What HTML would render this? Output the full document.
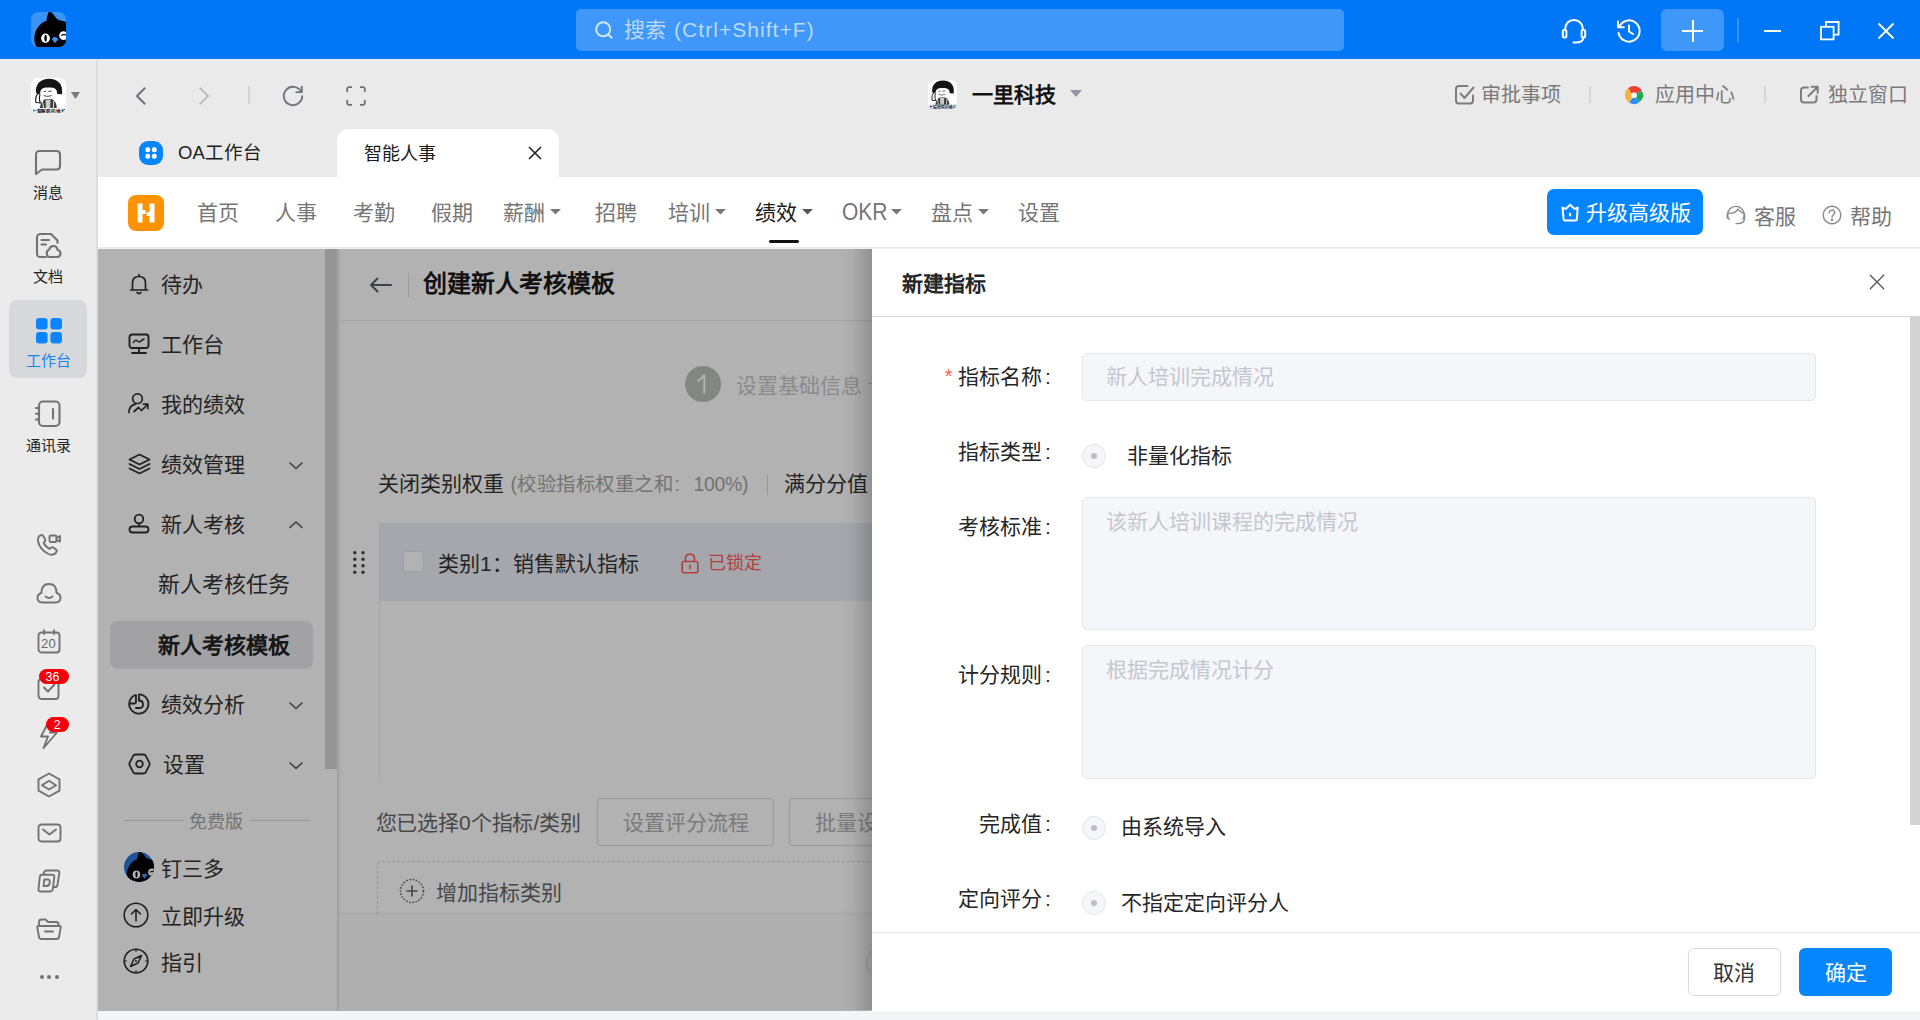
<!DOCTYPE html>
<html lang="zh-CN">
<head>
<meta charset="utf-8">
<title>DingTalk</title>
<style>
*{box-sizing:border-box;margin:0;padding:0}
html,body{width:1920px;height:1020px;overflow:hidden;background:#eaeaea;font-family:"Liberation Sans",sans-serif;color:#333;}
.a{position:absolute;white-space:nowrap}
.t{position:absolute;white-space:nowrap;line-height:1;transform:translateY(-50%)}
svg{position:absolute;overflow:visible}
#titlebar{left:0;top:0;width:1920px;height:59px;background:#0077f7}
#search{left:576px;top:9px;width:768px;height:42px;border-radius:5px;background:#3f97f9}
#rail{left:0;top:59px;width:98px;height:961px;background:#ebebeb;border-right:2px solid #dcdde0}
#topnav{left:98px;top:59px;width:1822px;height:118px;background:#eaeaea}
#appbar{left:98px;top:177px;width:1822px;height:70px;background:#fff}
#appline{left:98px;top:248.4px;width:1822px;height:.6px;background:#f0f0f0}
#under{left:98px;top:249px;width:774px;height:761.5px;background:#fff;overflow:hidden}
#mask{left:98px;top:249px;width:774px;height:761.5px;background:rgba(0,0,0,.3)}
#bottom{left:98px;top:1010.5px;width:1822px;height:10px;background:#f4f5f7}
#drawer{left:872px;top:249px;width:1048px;height:761px;background:#fff}
</style>
</head>
<body>
<div class="a" id="topnav"></div>
<div class="a" id="titlebar"></div>
<div class="a" id="search"></div>

<!-- ===== TITLE BAR ===== -->
<div class="a" style="left:31px;top:12px;width:35px;height:35px;border-radius:7px;background:#3b93f8;overflow:hidden">
<svg width="35" height="35" viewBox="0 0 35 35" style="left:0;top:0">
<path d="M5.5 35 C3.6 31 3 28 3.4 24.5 C4.5 16 10 10.5 15.9 8.6 L15.3 6.8 L16.2 5.6 L15.9 4.2 L16.9 3 L16.8 1.6 L17.6 0.3 L20.6 0.2 L26 7.1 C29 8.6 32 9 35 9.9 L35 35 Z" fill="#000"/>
<ellipse cx="14.5" cy="26.2" rx="4.4" ry="4.7" fill="#fff"/><ellipse cx="14.6" cy="26.2" rx="1.25" ry="3.4" fill="#000"/>
<circle cx="32.6" cy="23.6" r="4.4" fill="#fff"/><path d="M30.3 23.6 Q31.5 22.2 35 22.9" stroke="#000" stroke-width="1.2" fill="none"/>
<path d="M24 25 Q27 25.3 27.2 27.2 L24.6 30.6 Q24 31 23.4 30.6 L20.9 27.3 Q21 25.3 24 25Z" fill="#3d8ef5"/>
</svg></div>
<svg width="22" height="22" viewBox="0 0 22 22" style="left:593.3px;top:19.3px" fill="none" stroke="#d4e7fd" stroke-width="2" stroke-linecap="round"><circle cx="10.2" cy="10.3" r="7"/><path d="M15.6 15.6 L18.6 18.8"/></svg>
<div class="t" style="left:624px;top:29px;font-size:21px;color:#bcdafc;letter-spacing:.2px">搜索</div><div class="t" style="left:674px;top:29px;font-size:21px;color:#bcdafc;letter-spacing:1.05px">(Ctrl+Shift+F)</div>
<!-- headset -->
<svg width="26" height="26" viewBox="0 0 26 26" style="left:1561px;top:18px" fill="none" stroke="#fff" stroke-width="2" stroke-linecap="round" stroke-linejoin="round">
<path d="M4.2 12 V11 C4.2 5.5 8 2 13 2 C18 2 21.8 5.5 21.8 11 V12"/><rect x="1.8" y="12" width="3.6" height="7.5" rx="1.3"/><rect x="20.6" y="12" width="3.6" height="7.5" rx="1.3"/><path d="M22.4 19.5 C22.4 23 19.5 24.6 14.5 24.6 H12.5"/></svg>
<!-- history -->
<svg width="26" height="26" viewBox="0 0 26 26" style="left:1616px;top:18px" fill="none" stroke="#fff" stroke-width="2" stroke-linecap="round" stroke-linejoin="round">
<path d="M3.2 9 A10.6 10.6 0 1 1 2.6 15"/><path d="M2 3.5 V9.3 H7.8"/><path d="M13 7.5 V13.5 L17 16"/></svg>
<div class="a" style="left:1661px;top:9px;width:63px;height:42px;border-radius:6px;background:#3f97f9"></div>
<div class="a" style="left:1682px;top:30px;width:21px;height:2px;background:#fff"></div>
<div class="a" style="left:1691.5px;top:20px;width:2px;height:22px;background:#fff"></div>
<div class="a" style="left:1737px;top:18px;width:2px;height:24px;background:#3a93f8"></div>
<div class="a" style="left:1764px;top:30px;width:17px;height:2px;background:#fff"></div>
<svg width="20" height="20" viewBox="0 0 20 20" style="left:1820px;top:21px" fill="none" stroke="#fff" stroke-width="1.8"><rect x="1" y="5.8" width="12.6" height="12.6"/><path d="M6 5.8 V1 H18.6 V13.6 H13.6"/></svg>
<svg width="18" height="18" viewBox="0 0 18 18" style="left:1877px;top:22px" fill="none" stroke="#fff" stroke-width="1.8"><path d="M1.5 1.5 L16.5 16.5 M16.5 1.5 L1.5 16.5"/></svg>
<div class="a" id="rail"></div>
<!-- ===== RAIL ===== -->
<div class="a" style="left:31px;top:78px;width:35px;height:35px;border-radius:7px;background:#fff;overflow:hidden">
<svg width="35" height="35" viewBox="0 0 35 35" style="left:0;top:0">
<path d="M9 30 C9.5 24 12 21 17.5 20.5 C23 21 25.5 24 25.8 30 Z" fill="#3a3a3a"/>
<path d="M14.6 21.5 H19.6 L19.2 30 H14.8Z" fill="#c9c9c9"/>
<path d="M11.5 23 L12.5 30 M22.8 23 L22.3 30" stroke="#e8e8e8" stroke-width="1"/>
<path d="M5 24.5 C4 20 5.5 17 7.3 15.2 L9.2 16.5 C8 19 8.2 22 9.3 24.8 Z" fill="#fff" stroke="#1c1c1c" stroke-width="1.2"/>
<ellipse cx="17.4" cy="14.6" rx="8.6" ry="6.3" fill="#fbfbfb"/>
<path d="M5.3 15.5 C3.5 6 10 0.7 18 0.7 C26.5 0.7 32.5 6 31 16.2 L26.2 16 C26.2 11.5 24.5 9.6 17.5 9.6 C11 9.6 9.3 11.5 9.2 15.5 Z" fill="#151515"/>
<path d="M12.7 13.4 H15 M17.4 13.6 L20.6 13" stroke="#444" stroke-width="1"/>
<path d="M12.8 17.2 Q16.6 19.6 20.6 17.2" stroke="#777" stroke-width="1.2" fill="none"/>
<text x="0.7" y="34.5" font-size="4.85" font-weight="bold" fill="#111" font-family="Liberation Sans, sans-serif" textLength="33.8" lengthAdjust="spacingAndGlyphs">七猫智障的维护</text>
</svg></div>
<svg width="9" height="7" viewBox="0 0 9 7" style="left:71px;top:92px"><path d="M0 0 H9 L4.5 7Z" fill="#7a7a7a"/></svg>
<!-- msg -->
<svg width="28" height="28" viewBox="0 0 28 28" style="left:34px;top:149px" fill="none" stroke="#737373" stroke-width="2.1" stroke-linejoin="round" stroke-linecap="round"><path d="M5.5 2 H22.5 Q26 2 26 5.5 V17 Q26 20.5 22.5 20.5 H8 L2 25 V5.5 Q2 2 5.5 2Z"/></svg>
<div class="t" style="left:33px;top:192px;font-size:15px;color:#222">消息</div>
<!-- doc -->
<svg width="28" height="28" viewBox="0 0 28 28" style="left:35px;top:232px" fill="none" stroke="#737373" stroke-width="2.1" stroke-linejoin="round" stroke-linecap="round"><path d="M11 25 H5.5 Q2 25 2 21.5 V5.5 Q2 2 5.5 2 H16 L22.5 8.5 V11"/><path d="M6.5 8 H14 M6.5 12.5 H11"/><path d="M14.5 25 H22 Q25.5 25 25.5 21.5 Q25.5 18.5 22.5 18 Q22 14 18.5 14 Q15 14 14.2 17.5 Q11.5 18.5 11.8 21.5 Q12 25 14.5 25Z"/></svg>
<div class="t" style="left:33px;top:276px;font-size:15px;color:#222">文档</div>
<!-- workbench active -->
<div class="a" style="left:9px;top:300px;width:78px;height:78px;border-radius:8px;background:#d7d8db"></div>
<svg width="26" height="26" viewBox="0 0 26 26" style="left:35.5px;top:318px" fill="#0a84ff"><rect x="0" y="0" width="11.6" height="11.4" rx="3.2"/><rect x="14.4" y="0" width="11.6" height="11.4" rx="3.2"/><rect x="0" y="14" width="11.6" height="11.4" rx="3.2"/><rect x="14.4" y="14" width="11.6" height="11.4" rx="3.2"/></svg>
<div class="t" style="left:25.5px;top:360px;font-size:15px;color:#1a82f7">工作台</div>
<!-- contacts -->
<svg width="28" height="28" viewBox="0 0 28 28" style="left:34px;top:400px" fill="none" stroke="#737373" stroke-width="2.1" stroke-linejoin="round" stroke-linecap="round"><rect x="5" y="1.5" width="20.5" height="24.5" rx="4"/><path d="M2 8 H5 M2 13.7 H5 M2 19.5 H5"/><path d="M19 9 V18.5"/></svg>
<div class="t" style="left:25.5px;top:444.5px;font-size:15px;color:#222">通讯录</div>
<!-- phone -->
<svg width="26" height="24" viewBox="0 0 26 24" style="left:36px;top:533px" fill="none" stroke="#737373" stroke-width="1.9" stroke-linejoin="round" stroke-linecap="round"><path d="M3.2 3.2 Q5.5 1 7.2 3 L9 6 Q9.8 7.5 8.5 8.8 L7.6 9.7 Q9 13.5 13.5 16 L14.8 14.8 Q16 13.6 17.5 14.6 L20 16.5 Q21.5 18 19.8 20 Q17 23 12.5 21 Q3.5 16.5 2 8 Q1.6 5 3.2 3.2Z"/><rect x="13.5" y="2.5" width="7" height="6.5" rx="1.2"/><path d="M20.5 4.8 L24 3 V8.6 L20.5 6.8"/></svg>
<!-- cloud -->
<svg width="26" height="22" viewBox="0 0 26 22" style="left:36px;top:582px" fill="none" stroke="#737373" stroke-width="1.9" stroke-linejoin="round" stroke-linecap="round"><path d="M6.5 20.5 H19.5 Q24.5 20.5 24.5 15.8 Q24.5 12 20.5 11 Q20.5 2 13 2 Q5.5 2 5.5 11 Q1.5 12 1.5 15.8 Q1.5 20.5 6.5 20.5Z"/><path d="M9.5 14.5 Q13 17.5 16.5 14.5"/></svg>
<!-- calendar -->
<svg width="24" height="25" viewBox="0 0 24 25" style="left:36.5px;top:629px" fill="none" stroke="#737373" stroke-width="1.9" stroke-linejoin="round" stroke-linecap="round"><rect x="1.5" y="3.5" width="21" height="20" rx="3"/><path d="M7 1.2 V5 M17 1.2 V5"/></svg>
<div class="t" style="left:41px;top:643px;font-size:13px;color:#6a6a6a;letter-spacing:.2px">20</div>
<!-- task -->
<svg width="24" height="24" viewBox="0 0 24 24" style="left:37px;top:677px" fill="none" stroke="#737373" stroke-width="1.9" stroke-linejoin="round" stroke-linecap="round"><rect x="1.5" y="2" width="20" height="20" rx="3"/><path d="M7 10.5 L11 14.5 L17.5 7.5"/></svg>
<div class="a" style="left:39px;top:669px;width:29.5px;height:15px;border-radius:7.5px;background:#f5000a"></div>
<div class="t" style="left:45.5px;top:677px;font-size:12.5px;color:#fff">36</div>
<!-- bolt -->
<svg width="22" height="30" viewBox="0 0 22 30" style="left:38px;top:721px" fill="none" stroke="#737373" stroke-width="1.9" stroke-linejoin="round" stroke-linecap="round"><path d="M9 4 L3 15.5 H10 L5.5 27 L19 11.5 H12 L15 4Z"/></svg>
<div class="a" style="left:46px;top:717px;width:22.5px;height:14.5px;border-radius:7.5px;background:#f5000a"></div>
<div class="t" style="left:53.7px;top:724.5px;font-size:12.5px;color:#fff">2</div>
<!-- hex -->
<svg width="26" height="26" viewBox="0 0 26 26" style="left:35.5px;top:772px" fill="none" stroke="#737373" stroke-width="1.9" stroke-linejoin="round" stroke-linecap="round"><path d="M13 1.5 L23.5 7.3 V18.7 L13 24.5 L2.5 18.7 V7.3Z"/><path d="M13 8.8 L20 13.2 L13 17.5 L6 13.2Z"/></svg>
<!-- mail -->
<svg width="25" height="20" viewBox="0 0 25 20" style="left:36.5px;top:823px" fill="none" stroke="#737373" stroke-width="1.9" stroke-linejoin="round" stroke-linecap="round"><rect x="1.5" y="1.5" width="22" height="17" rx="3"/><path d="M6 6.5 L12.5 11.5 L19 6.5"/></svg>
<!-- D docs -->
<svg width="24" height="24" viewBox="0 0 24 24" style="left:37px;top:869px" fill="none" stroke="#737373" stroke-width="1.9" stroke-linejoin="round" stroke-linecap="round"><path d="M6.5 5.5 L7 3.5 Q7.5 1.5 9.5 1.5 H20 Q22.7 1.5 22.3 4.2 L20.5 16 Q20.2 18 18 18 H17.3"/><path d="M4 5.8 H15 Q17.7 5.8 17.3 8.5 L15.8 20 Q15.5 22.5 13 22.5 H3.5 Q1.2 22.5 1.5 20 L2.8 8 Q3 5.8 5 5.8Z"/><path d="M7.3 10.5 H10.5 Q13.2 10.5 12.8 13.5 Q12.4 17 9.5 17 H6.5Z"/></svg>
<!-- box -->
<svg width="26" height="24" viewBox="0 0 26 24" style="left:35.5px;top:917px" fill="none" stroke="#737373" stroke-width="1.9" stroke-linejoin="round" stroke-linecap="round"><path d="M3 9 V5 Q3 2.5 5.5 2.5 H9.5 L12 5 H20 Q22.5 5 22.5 7.5 V9"/><path d="M2.5 9 H23.5 Q25 9 24.7 10.5 L23 20 Q22.6 22 20.5 22 H5.5 Q3.4 22 3 20 L1.3 10.5 Q1 9 2.5 9Z"/><path d="M9 14.5 H17"/></svg>
<!-- dots -->
<div class="a" style="left:39.5px;top:974.5px;width:4px;height:4px;border-radius:2px;background:#737373"></div>
<div class="a" style="left:47px;top:974.5px;width:4px;height:4px;border-radius:2px;background:#737373"></div>
<div class="a" style="left:54.5px;top:974.5px;width:4px;height:4px;border-radius:2px;background:#737373"></div>

<div class="a" id="appbar"></div>
<div class="a" id="appline"></div>
<!-- ===== TOP NAV ===== -->
<svg width="12" height="20" viewBox="0 0 12 20" style="left:135px;top:86px" fill="none" stroke="#6f7379" stroke-width="2" stroke-linecap="butt" stroke-linejoin="miter"><path d="M10.2 1.8 L2 10 L10.2 18.2"/></svg>
<svg width="12" height="20" viewBox="0 0 12 20" style="left:198px;top:86px" fill="none" stroke="#bbbcbf" stroke-width="2" stroke-linecap="butt" stroke-linejoin="miter"><path d="M1.8 1.8 L10 10 L1.8 18.2"/></svg>
<div class="a" style="left:248px;top:86px;width:2px;height:18px;background:#d2d2d2"></div>
<svg width="24" height="24" viewBox="0 0 24 24" style="left:281px;top:83px" fill="none" stroke="#6f7379" stroke-width="1.9" stroke-linecap="butt" stroke-linejoin="miter"><path d="M21.2 12.5 A9.2 9.2 0 1 1 20.3 9"/><path d="M14.6 9.1 H20.8 V2.9"/></svg>
<svg width="22" height="22" viewBox="0 0 22 22" style="left:345px;top:85px" fill="none" stroke="#6f7379" stroke-width="1.8" stroke-linecap="butt" stroke-linejoin="round"><path d="M2.2 7 V4.2 Q2.2 2.2 4.2 2.2 H7 M15 2.2 H17.8 Q19.8 2.2 19.8 4.2 V7 M19.8 15 V17.8 Q19.8 19.8 17.8 19.8 H15 M7 19.8 H4.2 Q2.2 19.8 2.2 17.8 V15"/></svg>
<!-- company -->
<div class="a" style="left:928px;top:80px;width:29px;height:29px;border-radius:6px;background:#fff;overflow:hidden">
<svg width="29" height="29" viewBox="0 0 35 35" style="left:0;top:0">
<path d="M9 30 C9.5 24 12 21 17.5 20.5 C23 21 25.5 24 25.8 30 Z" fill="#3a3a3a"/>
<path d="M14.6 21.5 H19.6 L19.2 30 H14.8Z" fill="#c9c9c9"/>
<path d="M11.5 23 L12.5 30 M22.8 23 L22.3 30" stroke="#e8e8e8" stroke-width="1"/>
<path d="M5 24.5 C4 20 5.5 17 7.3 15.2 L9.2 16.5 C8 19 8.2 22 9.3 24.8 Z" fill="#fff" stroke="#1c1c1c" stroke-width="1.2"/>
<ellipse cx="17.4" cy="14.6" rx="8.6" ry="6.3" fill="#fbfbfb"/>
<path d="M5.3 15.5 C3.5 6 10 0.7 18 0.7 C26.5 0.7 32.5 6 31 16.2 L26.2 16 C26.2 11.5 24.5 9.6 17.5 9.6 C11 9.6 9.3 11.5 9.2 15.5 Z" fill="#151515"/>
<path d="M12.7 13.4 H15 M17.4 13.6 L20.6 13" stroke="#444" stroke-width="1"/>
<path d="M12.8 17.2 Q16.6 19.6 20.6 17.2" stroke="#777" stroke-width="1.2" fill="none"/>
<text x="0.7" y="34.5" font-size="4.85" font-weight="bold" fill="#111" font-family="Liberation Sans, sans-serif" textLength="33.8" lengthAdjust="spacingAndGlyphs">七猫智障的维护</text>
</svg></div>
<div class="t" style="left:972px;top:93.5px;font-size:21px;font-weight:bold;color:#111">一里科技</div>
<svg width="12" height="7" viewBox="0 0 12 7" style="left:1069.5px;top:89.5px"><path d="M0 0 H12 L6 7Z" fill="#8f95a1"/></svg>
<!-- right links -->
<svg width="22" height="22" viewBox="0 0 22 22" style="left:1454px;top:84px" fill="none" stroke="#7d7d7d" stroke-width="2" stroke-linecap="round" stroke-linejoin="round"><path d="M19 11.5 V16.5 Q19 19.5 16 19.5 H5 Q2 19.5 2 16.5 V5 Q2 2 5 2 H13.5"/><path d="M6.5 9.5 L10.5 14 L19.5 3.5"/></svg>
<div class="t" style="left:1481px;top:95px;font-size:20px;color:#7a7a7a">审批事项</div>
<div class="a" style="left:1589px;top:86px;width:2px;height:17px;background:#d6d6d6"></div>
<svg width="20" height="20" viewBox="0 0 20 20" style="left:1624px;top:85px"><circle cx="10" cy="10" r="9" fill="#fff"/>
<path d="M10 1 A9 9 0 0 1 18 6 L12.5 8.5 Q10 6.5 7.5 8.5 L4 3.2 A9 9 0 0 1 10 1Z" fill="#ea4335"/>
<path d="M18 6 A9 9 0 0 1 16 16.8 L11.5 12.5 Q13.5 10.5 12.5 8.5Z" fill="#1faa55"/>
<path d="M16 16.8 A9 9 0 0 1 5 17.5 L8.5 12.5 Q10 14 11.5 12.5Z" fill="#2d8cf0"/>
<path d="M5 17.5 A9 9 0 0 1 4 3.2 L7.5 8.5 Q6.5 10.5 8.5 12.5Z" fill="#fbb03b"/>
<circle cx="10" cy="10.4" r="2.6" fill="#fff"/></svg>
<div class="t" style="left:1655px;top:95px;font-size:20px;color:#7a7a7a">应用中心</div>
<div class="a" style="left:1764px;top:86px;width:2px;height:17px;background:#d6d6d6"></div>
<svg width="22" height="22" viewBox="0 0 22 22" style="left:1799px;top:84px" fill="none" stroke="#7d7d7d" stroke-width="2" stroke-linecap="round" stroke-linejoin="round"><path d="M17.5 12 V15.5 Q17.5 18.5 14.5 18.5 H5 Q2 18.5 2 15.5 V6.5 Q2 3.5 5 3.5 H9"/><path d="M9.5 12 L18.5 3 M12.5 2.8 H18.7 V9"/></svg>
<div class="t" style="left:1828px;top:95px;font-size:20px;color:#7a7a7a">独立窗口</div>
<!-- tabs -->
<div class="a" style="left:139px;top:141px;width:24px;height:24px;border-radius:9px;background:#0586ff"></div>
<svg width="24" height="24" viewBox="0 0 24 24" style="left:139px;top:141px" fill="#fff"><rect x="6.3" y="6.3" width="4.9" height="4.9" rx="2.2"/><rect x="12.8" y="6.3" width="4.9" height="4.9" rx="2.2"/><rect x="6.3" y="12.8" width="4.9" height="4.9" rx="2.2"/><rect x="12.8" y="12.8" width="4.9" height="4.9" rx="2.2"/></svg>
<div class="t" style="left:178px;top:152.5px;font-size:18.5px;color:#1a1a1a">OA工作台</div>
<div class="a" style="left:337px;top:129px;width:222px;height:49px;border-radius:11px 11px 0 0;background:#fff"></div>
<div class="t" style="left:364px;top:153.5px;font-size:18px;color:#1a1a1a">智能人事</div>
<svg width="14" height="14" viewBox="0 0 14 14" style="left:527.5px;top:146px" fill="none" stroke="#222" stroke-width="1.6"><path d="M1 1 L13 13 M13 1 L1 13"/></svg>
<!-- ===== APP BAR ===== -->
<div class="a" style="left:128px;top:195px;width:36px;height:36px;border-radius:8px;background:#ff9200"></div>
<svg width="36" height="36" viewBox="0 0 36 36" style="left:128px;top:195px" fill="#fff"><path d="M9.5 8.5 H14.5 V15 H17.5 V19 H14.5 V27.5 H9.5Z M26.5 27.5 H21.5 V21 H18.5 V17 H21.5 V8.5 H26.5Z"/></svg>
<div class="t" style="left:197px;top:212.4px;font-size:21px;color:#757575">首页</div>
<div class="t" style="left:275px;top:212.4px;font-size:21px;color:#757575">人事</div>
<div class="t" style="left:353px;top:212.4px;font-size:21px;color:#757575">考勤</div>
<div class="t" style="left:431px;top:212.4px;font-size:21px;color:#757575">假期</div>
<div class="t" style="left:503px;top:212.4px;font-size:21px;color:#757575">薪酬</div>
<svg width="11" height="5.6" viewBox="0 0 11 5.6" style="left:550px;top:208.8px"><path d="M0 0 H11 L5.5 5.6Z" fill="#777"/></svg>
<div class="t" style="left:595px;top:212.4px;font-size:21px;color:#757575">招聘</div>
<div class="t" style="left:668px;top:212.4px;font-size:21px;color:#757575">培训</div>
<svg width="11" height="5.6" viewBox="0 0 11 5.6" style="left:714.5px;top:208.8px"><path d="M0 0 H11 L5.5 5.6Z" fill="#777"/></svg>
<div class="t" style="left:755px;top:212.4px;font-size:21px;color:#1a1a1a">绩效</div>
<svg width="11" height="5.6" viewBox="0 0 11 5.6" style="left:801.5px;top:208.8px"><path d="M0 0 H11 L5.5 5.6Z" fill="#555"/></svg>
<div class="t" style="left:842px;top:212.4px;font-size:21px;color:#757575;transform:translateY(-50%) scaleY(1.12);transform-origin:50% 50%">OKR</div>
<svg width="11" height="5.6" viewBox="0 0 11 5.6" style="left:891px;top:208.8px"><path d="M0 0 H11 L5.5 5.6Z" fill="#777"/></svg>
<div class="t" style="left:931px;top:212.4px;font-size:21px;color:#757575">盘点</div>
<svg width="11" height="5.6" viewBox="0 0 11 5.6" style="left:977.5px;top:208.8px"><path d="M0 0 H11 L5.5 5.6Z" fill="#777"/></svg>
<div class="t" style="left:1018px;top:212.4px;font-size:21px;color:#757575">设置</div>
<div class="a" style="left:769px;top:240px;width:30px;height:3px;border-radius:1.5px;background:#111"></div>
<div class="a" style="left:1547px;top:189px;width:156px;height:46px;border-radius:7px;background:#0586ff"></div>
<svg width="18" height="18" viewBox="0 0 18 18" style="left:1560.5px;top:203.5px" fill="none" stroke="#fff" stroke-width="2" stroke-linejoin="round"><path d="M1.5 3.6 L4.9 4.9 L9.15 0.8 L13.4 4.9 L16.7 3.6 L15.8 15.4 Q15.7 16.4 14.7 16.4 H3.7 Q2.7 16.4 2.6 15.4 Z"/><path d="M9.15 8.8 V12.3" stroke-linecap="butt"/></svg>
<div class="t" style="left:1586px;top:212.4px;font-size:21px;color:#fff;font-weight:500">升级高级版</div>
<svg width="22" height="22" viewBox="0 0 22 22" style="left:1725px;top:204px" fill="none" stroke="#8a8a8a" stroke-width="1.4" stroke-linecap="round"><path d="M4.2 15.5 A8.3 8.3 0 1 1 18 15"/><path d="M3.8 9.5 C8 9.5 11 8.2 13 5.2 C14.5 7.5 16.3 8.8 18.6 9.3"/><path d="M19.6 10 V14 C19.6 17.8 17 19.6 12.6 19.6 H11"/><path d="M2.2 10 V14.2"/></svg>
<div class="t" style="left:1754px;top:215.5px;font-size:21px;color:#757575">客服</div>
<svg width="20" height="20" viewBox="0 0 20 20" style="left:1822px;top:205px" fill="none" stroke="#8a8a8a" stroke-width="1.4" stroke-linecap="round"><circle cx="10" cy="10" r="8.8"/><path d="M7.2 7.8 C7.2 4.2 12.8 4.2 12.8 7.6 C12.8 9.8 10 9.8 10 12.2"/><circle cx="10" cy="14.8" r=".6" fill="#8a8a8a"/></svg>
<div class="t" style="left:1850px;top:215.5px;font-size:21px;color:#757575">帮助</div>

<div class="a" id="under">
<div class="a" id="uin" style="left:-98px;top:-249px;width:1920px;height:1020px">
<!-- left menu -->
<div class="a" style="left:98px;top:249px;width:241px;height:762px;background:#fff;border-right:2px solid #e9e9e9;box-shadow:2px 0 3px rgba(0,0,0,.04)"></div>
<div class="a" style="left:325px;top:249px;width:12px;height:520px;background:#d6d6d6"></div>
<svg width="20" height="22" viewBox="0 0 20 22" style="left:129px;top:273px" fill="none" stroke="#2e2e2e" stroke-width="1.7" stroke-linecap="round" stroke-linejoin="round"><path d="M1.5 17 H18.5 M3.5 17 V10 Q3.5 3.5 10 3.5 Q16.5 3.5 16.5 10 V17 M10 3.2 V1.5 M8 19.5 Q10 21.5 12 19.5"/></svg>
<div class="t" style="left:161px;top:283.5px;font-size:21px;color:#333">待办</div>
<svg width="22" height="22" viewBox="0 0 22 22" style="left:128px;top:333px" fill="none" stroke="#2e2e2e" stroke-width="1.9" stroke-linecap="round" stroke-linejoin="round"><rect x="1.5" y="1.5" width="19" height="13.5" rx="2.5"/><path d="M11 15 V19.5 M4 20 H18"/><path d="M5.5 9.5 Q7.5 6 9.5 8 Q11.5 10 13.5 7.5 L16 6" stroke-width="1.5"/></svg>
<div class="t" style="left:161px;top:343.5px;font-size:21px;color:#333">工作台</div>
<svg width="23" height="23" viewBox="0 0 23 23" style="left:127px;top:392px" fill="none" stroke="#2e2e2e" stroke-width="1.7" stroke-linecap="round" stroke-linejoin="round"><circle cx="10.5" cy="6.7" r="4.8"/><path d="M2 20.5 Q2 13.5 8.5 12.2"/><path d="M7 19.5 L11.5 15.5 L14.5 18.5 L20.5 12.5 M16.5 12.2 H20.8 V16.5"/></svg>
<div class="t" style="left:161px;top:403.5px;font-size:21px;color:#333">我的绩效</div>
<svg width="23" height="22" viewBox="0 0 23 22" style="left:127.5px;top:453px" fill="none" stroke="#2e2e2e" stroke-width="1.7" stroke-linecap="round" stroke-linejoin="round"><path d="M11.5 1.5 L21.5 6.5 L11.5 11.5 L1.5 6.5Z"/><path d="M1.5 11 L11.5 16 L21.5 11"/><path d="M1.5 15.5 L11.5 20.5 L21.5 15.5"/></svg>
<div class="t" style="left:161px;top:463.5px;font-size:21px;color:#333">绩效管理</div>
<svg width="14" height="8" viewBox="0 0 14 8" style="left:289px;top:461.5px" fill="none" stroke="#555" stroke-width="1.5" stroke-linecap="round" stroke-linejoin="round"><path d="M1 1 L7 6.5 L13 1"/></svg>
<svg width="22" height="22" viewBox="0 0 22 22" style="left:128px;top:513px" fill="none" stroke="#2e2e2e" stroke-width="1.8" stroke-linecap="round" stroke-linejoin="round"><circle cx="11" cy="6" r="4.3"/><path d="M11 10.5 V13"/><path d="M4.5 13.5 H17.5 Q20.5 13.5 20.5 16.5 Q20.5 19.5 17.5 19.5 H4.5 Q1.5 19.5 1.5 16.5 Q1.5 13.5 4.5 13.5Z"/></svg>
<div class="t" style="left:161px;top:523.5px;font-size:21px;color:#333">新人考核</div>
<svg width="14" height="8" viewBox="0 0 14 8" style="left:289px;top:521.0px" fill="none" stroke="#555" stroke-width="1.5" stroke-linecap="round" stroke-linejoin="round"><path d="M1 6.5 L7 1 L13 6.5"/></svg>
<div class="t" style="left:157.5px;top:585.3px;font-size:22px;color:#333">新人考核任务</div>
<div class="a" style="left:110px;top:621px;width:203px;height:48px;border-radius:8px;background:#e8e9ed"></div>
<div class="t" style="left:157.5px;top:645.5px;font-size:22px;font-weight:bold;color:#222">新人考核模板</div>
<svg width="22" height="22" viewBox="0 0 22 22" style="left:128px;top:693px" fill="none" stroke="#2e2e2e" stroke-width="1.8" stroke-linecap="round" stroke-linejoin="round"><path d="M7 2.2 A9.6 9.6 0 1 0 11 1.4 V7.5"/><path d="M1.6 10.5 H6.5 Q8 10.5 8 9 V2"/><path d="M11 7.5 Q15 7.5 15 11.5 Q15 15 11.5 15 H8" /></svg>
<div class="t" style="left:161px;top:703.5px;font-size:21px;color:#333">绩效分析</div>
<svg width="14" height="8" viewBox="0 0 14 8" style="left:289px;top:701.5px" fill="none" stroke="#555" stroke-width="1.5" stroke-linecap="round" stroke-linejoin="round"><path d="M1 1 L7 6.5 L13 1"/></svg>
<svg width="23" height="22" viewBox="0 0 23 22" style="left:127.5px;top:753px" fill="none" stroke="#2e2e2e" stroke-width="1.8" stroke-linecap="round" stroke-linejoin="round"><path d="M7.5 1.5 H15.5 Q17 1.5 17.8 2.8 L21.3 9.7 Q21.9 11 21.3 12.3 L17.8 19.2 Q17 20.5 15.5 20.5 H7.5 Q6 20.5 5.2 19.2 L1.7 12.3 Q1.1 11 1.7 9.7 L5.2 2.8 Q6 1.5 7.5 1.5Z"/><circle cx="11.5" cy="11" r="3.3"/></svg>
<div class="t" style="left:163px;top:764px;font-size:21px;color:#333">设置</div>
<svg width="14" height="8" viewBox="0 0 14 8" style="left:289px;top:761.5px" fill="none" stroke="#555" stroke-width="1.5" stroke-linecap="round" stroke-linejoin="round"><path d="M1 1 L7 6.5 L13 1"/></svg>
<div class="a" style="left:124px;top:820px;width:60px;height:1px;background:#d9d9d9"></div>
<div class="a" style="left:250px;top:820px;width:60px;height:1px;background:#d9d9d9"></div>
<div class="t" style="left:189px;top:821.5px;font-size:18px;color:#a6a6a6">免费版</div>
<div class="a" style="left:124px;top:852px;width:30px;height:30px;border-radius:15px;background:#2a76d8;overflow:hidden">
<svg width="30" height="30" viewBox="0 0 35 35" style="left:0;top:0"><path d="M5.5 35 C3.6 31 3 28 3.4 24.5 C4.5 16 10 10.5 15.9 8.6 L15.3 6.8 L16.2 5.6 L15.9 4.2 L16.9 3 L16.8 1.6 L17.6 0.3 L20.6 0.2 L26 7.1 C29 8.6 32 9 35 9.9 L35 35 Z" fill="#000"/>
<ellipse cx="14.5" cy="26.2" rx="4.4" ry="4.7" fill="#fff"/><ellipse cx="14.6" cy="26.2" rx="1.25" ry="3.4" fill="#000"/>
<circle cx="32.6" cy="23.6" r="4.4" fill="#fff"/><path d="M30.3 23.6 Q31.5 22.2 35 22.9" stroke="#000" stroke-width="1.2" fill="none"/>
<path d="M24 25 Q27 25.3 27.2 27.2 L24.6 30.6 Q24 31 23.4 30.6 L20.9 27.3 Q21 25.3 24 25Z" fill="#3d8ef5"/></svg></div>
<div class="t" style="left:161px;top:867.5px;font-size:21px;color:#333">钉三多</div>
<svg width="26" height="26" viewBox="0 0 26 26" style="left:123.3px;top:901.8px" fill="none" stroke="#2e2e2e" stroke-width="1.6" stroke-linecap="round" stroke-linejoin="round"><circle cx="13" cy="13" r="11.8"/><path d="M13 19 V7.5 M8.5 12 L13 7.5 L17.5 12"/></svg>
<div class="t" style="left:161px;top:915.5px;font-size:21px;color:#333">立即升级</div>
<svg width="26" height="26" viewBox="0 0 26 26" style="left:123.3px;top:948.2px" fill="none" stroke="#2e2e2e" stroke-width="1.6" stroke-linecap="round" stroke-linejoin="round"><circle cx="13" cy="13" r="11.8"/><path d="M18.5 7.5 L15 15 L7.5 18.5 L11 11Z"/><path d="M13 1.2 V3.5 M13 22.5 V24.8 M1.2 13 H3.5 M22.5 13 H24.8" stroke-width="1.2"/><circle cx="13" cy="13" r="1" fill="#2e2e2e" stroke="none"/></svg>
<div class="t" style="left:161px;top:961.5px;font-size:21px;color:#333">指引</div>
<!-- main -->
<div class="a" style="left:339px;top:320px;width:540px;height:1px;background:#ececec"></div>
<svg width="24" height="16" viewBox="0 0 24 16" style="left:368.5px;top:277px" fill="none" stroke="#5a5f68" stroke-width="2" stroke-linecap="round" stroke-linejoin="round"><path d="M22 8 H2 M8.5 1.5 L2 8 L8.5 14.5"/></svg>
<div class="a" style="left:408px;top:273px;width:1px;height:24px;background:#e0e0e0"></div>
<div class="t" style="left:423px;top:284.3px;font-size:24px;font-weight:bold;color:#1a1a1a">创建新人考核模板</div>
<div class="a" style="left:685px;top:366px;width:36px;height:36px;border-radius:18px;background:#bec0be"></div>
<svg width="12" height="20" viewBox="0 0 12 20" style="left:696px;top:374px" fill="none" stroke="#fff" stroke-width="2" stroke-linejoin="miter"><path d="M1.5 6.8 Q6 5 8.3 0.8 V19.4"/></svg>
<div class="t" style="left:736px;top:384.7px;font-size:21px;color:#c8c8c8">设置基础信息</div>
<div class="a" style="left:868px;top:383px;width:20px;height:1px;background:#d0d0d0"></div>
<div class="t" style="left:378px;top:482.5px;font-size:21px;color:#333">关闭类别权重</div>
<div class="t" style="left:510.5px;top:484.8px;font-size:19.4px;color:#a6a6a6;letter-spacing:.45px">(校验指标权重之和</div><div class="t" style="left:674.5px;top:484.8px;font-size:19.4px;color:#a6a6a6">:</div><div class="t" style="left:693.5px;top:484.8px;font-size:19.4px;color:#a6a6a6;letter-spacing:-.3px">100%)</div>
<div class="a" style="left:767px;top:474px;width:1px;height:21px;background:#dcdcdc"></div>
<div class="t" style="left:784px;top:482.5px;font-size:21px;color:#333">满分分值</div>
<div class="a" style="left:379px;top:523px;width:520px;height:78px;background:#ecf0f7"></div>
<div class="a" style="left:379px;top:601px;width:1px;height:182px;background:#ececec"></div>
<svg width="12" height="24" viewBox="0 0 12 24" style="left:353px;top:550.5px" fill="#444"><circle cx="1.8" cy="1.8" r="1.7"/><circle cx="10.0" cy="1.8" r="1.7"/><circle cx="1.8" cy="8.3" r="1.7"/><circle cx="10.0" cy="8.3" r="1.7"/><circle cx="1.8" cy="14.8" r="1.7"/><circle cx="10.0" cy="14.8" r="1.7"/><circle cx="1.8" cy="21.3" r="1.7"/><circle cx="10.0" cy="21.3" r="1.7"/></svg>
<div class="a" style="left:403px;top:551px;width:21px;height:21px;border-radius:3px;background:#fff;border:1.5px solid #e4e4e4"></div>
<div class="t" style="left:438px;top:562.5px;font-size:21px;color:#333">类别1：</div><div class="t" style="left:513.3px;top:562.5px;font-size:21px;color:#333;letter-spacing:-.1px">销售默认指标</div>
<svg width="18" height="21" viewBox="0 0 18 21" style="left:680.5px;top:552.5px" fill="none" stroke="#ff5a5a" stroke-width="1.6" stroke-linejoin="round" stroke-linecap="round"><rect x="1.2" y="8.5" width="15.6" height="11.3" rx="1.5"/><path d="M4.5 8.5 V5.5 Q4.5 1.2 9 1.2 Q13.5 1.2 13.5 5.5 V8.5 M9 12.5 V15.5"/></svg>
<div class="t" style="left:708px;top:562.5px;font-size:18px;color:#ff5a5a">已锁定</div>
<div class="t" style="left:375.5px;top:822px;font-size:21px;color:#666;letter-spacing:-.1px">您已选择0个指标/类别</div>
<div class="a" style="left:597px;top:798px;width:177px;height:48px;border-radius:4px;border:1.5px solid #dcdcdc;background:#fff"></div>
<div class="t" style="left:623px;top:822px;font-size:21px;color:#b0b0b0">设置评分流程</div>
<div class="a" style="left:789px;top:798px;width:177px;height:48px;border-radius:4px;border:1.5px solid #dcdcdc;background:#fff"></div>
<div class="t" style="left:814.5px;top:822px;font-size:21px;color:#b0b0b0">批量设置</div>
<div class="a" style="left:377px;top:861px;width:900px;height:80px;border-radius:5px;border:1.5px dashed #d4d4d4"></div>
<svg width="26" height="26" viewBox="0 0 26 26" style="left:398.5px;top:878px" fill="none" stroke="#666" stroke-width="1.5"><circle cx="13" cy="13" r="11.5" stroke-dasharray="1.6 1.6"/><path d="M13 7.5 V18.5 M7.5 13 H18.5" stroke-width="1.7"/></svg>
<div class="t" style="left:436px;top:891.5px;font-size:21px;color:#666">增加指标类别</div>
<div class="a" style="left:339px;top:915px;width:540px;height:95px;background:#fbfbfb;box-shadow:0 -2px 4px rgba(0,0,0,.05)"></div>
<div class="a" style="left:866px;top:947px;width:60px;height:32px;border-radius:16px;border:1.5px solid #dcdcdc"></div>
<div class="a" style="left:840px;top:249px;width:32px;height:761px;background:linear-gradient(to right,rgba(0,0,0,0),rgba(0,0,0,.03) 40%,rgba(0,0,0,.19))"></div>
<!-- MAIN-END -->
</div>
</div>
<div class="a" id="mask"></div>
<div class="a" id="drawer"></div>
<!-- ===== DRAWER ===== -->
<div class="t" style="left:902px;top:283px;font-size:21px;font-weight:bold;color:#262626">新建指标</div>
<svg width="16" height="16" viewBox="0 0 16 16" style="left:1869px;top:274px" fill="none" stroke="#555" stroke-width="1.3" stroke-linecap="round"><path d="M1.3 1.3 L14.7 14.7 M14.7 1.3 L1.3 14.7"/></svg>
<div class="a" style="left:872px;top:316px;width:1048px;height:1.4px;background:#d9d9dc"></div>
<div class="a" style="left:1910px;top:317px;width:10px;height:508px;background:#d3d3d3"></div>
<div class="t" style="left:944.8px;top:375.5px;font-size:20px;color:#ff5a4d">*</div>
<div class="t" style="left:958px;top:375.5px;font-size:21px;color:#262626">指标名称</div><div class="t" style="left:1045px;top:375.5px;font-size:21px;color:#262626">:</div>
<div class="a" style="left:1082px;top:353px;width:734px;height:48px;border-radius:5px;background:#f5f6fa;border:1.5px solid #e4e6ec"></div>
<div class="t" style="left:1105.5px;top:375.5px;font-size:21px;color:#c4c7ce">新人培训完成情况</div>
<div class="t" style="left:958px;top:451px;font-size:21px;color:#262626">指标类型</div><div class="t" style="left:1045px;top:451px;font-size:21px;color:#262626">:</div>
<div class="a" style="left:1082px;top:444px;width:24px;height:24px;border-radius:12px;background:#f5f6fa;border:1.5px solid #e4e6ec"></div>
<div class="a" style="left:1091px;top:453px;width:6px;height:6px;border-radius:3px;background:#b9bdc9"></div>
<div class="t" style="left:1127px;top:455px;font-size:21px;color:#262626">非量化指标</div>
<div class="t" style="left:958px;top:526px;font-size:21px;color:#262626">考核标准</div><div class="t" style="left:1045px;top:526px;font-size:21px;color:#262626">:</div>
<div class="a" style="left:1082px;top:497px;width:734px;height:133px;border-radius:5px;background:#f5f6fa;border:1.5px solid #e4e6ec"></div>
<div class="t" style="left:1105.5px;top:520.5px;font-size:21px;color:#c4c7ce">该新人培训课程的完成情况</div>
<div class="t" style="left:958px;top:674px;font-size:21px;color:#262626">计分规则</div><div class="t" style="left:1045px;top:674px;font-size:21px;color:#262626">:</div>
<div class="a" style="left:1082px;top:645px;width:734px;height:134px;border-radius:5px;background:#f5f6fa;border:1.5px solid #e4e6ec"></div>
<div class="t" style="left:1105.5px;top:668.7px;font-size:21px;color:#c4c7ce">根据完成情况计分</div>
<div class="t" style="left:979px;top:822.5px;font-size:21px;color:#262626">完成值</div><div class="t" style="left:1045px;top:822.5px;font-size:21px;color:#262626">:</div>
<div class="a" style="left:1082px;top:816px;width:24px;height:24px;border-radius:12px;background:#f5f6fa;border:1.5px solid #e4e6ec"></div>
<div class="a" style="left:1091px;top:825px;width:6px;height:6px;border-radius:3px;background:#b9bdc9"></div>
<div class="t" style="left:1120.5px;top:826px;font-size:21px;color:#262626">由系统导入</div>
<div class="t" style="left:958px;top:897.5px;font-size:21px;color:#262626">定向评分</div><div class="t" style="left:1045px;top:897.5px;font-size:21px;color:#262626">:</div>
<div class="a" style="left:1082px;top:891px;width:24px;height:24px;border-radius:12px;background:#f5f6fa;border:1.5px solid #e4e6ec"></div>
<div class="a" style="left:1091px;top:900px;width:6px;height:6px;border-radius:3px;background:#b9bdc9"></div>
<div class="t" style="left:1120.5px;top:901.5px;font-size:21px;color:#262626">不指定定向评分人</div>
<div class="a" style="left:872px;top:931.6px;width:1048px;height:79px;background:#fff;border-top:1.5px solid #e4e4e6"></div>
<div class="a" style="left:1688px;top:948px;width:93px;height:48px;border-radius:6px;background:#fff;border:1.5px solid #d9dce4"></div>
<div class="t" style="left:1713px;top:971.5px;font-size:21px;color:#333">取消</div>
<div class="a" style="left:1799px;top:948px;width:93px;height:48px;border-radius:6px;background:#0586ff"></div>
<div class="t" style="left:1824.5px;top:971.5px;font-size:21px;color:#fff">确定</div>

<div class="a" id="bottom"></div>
</body>
</html>
